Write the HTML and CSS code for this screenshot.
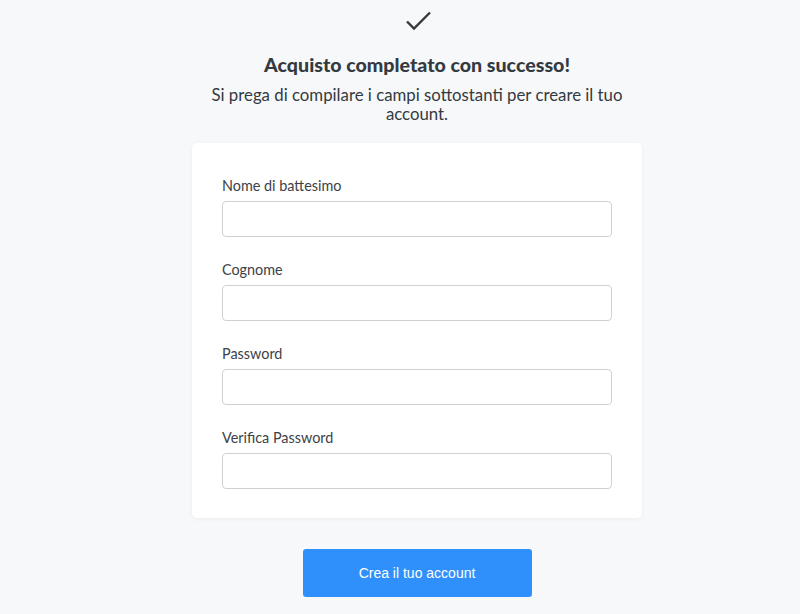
FILE: index.html
```html
<!DOCTYPE html>
<html lang="it">
<head>
<meta charset="utf-8">
<link rel="stylesheet" href="styles.css">
</head>
<body>
<main class="page">
  <svg class="check" width="30" height="24" viewBox="0 0 30 24"><path d="M3 11.5 L10 18.5 L26 2.5" fill="none" stroke="#343a40" stroke-width="2.4"/></svg>
  <h1 class="title">Acquisto completato con successo!</h1>
  <p class="subtitle">Si prega di compilare i campi sottostanti per creare il tuo account.</p>
  <form class="card">
    <div class="field"><label class="label">Nome di battesimo</label><input class="input" type="text"></div>
    <div class="field"><label class="label">Cognome</label><input class="input" type="text"></div>
    <div class="field"><label class="label">Password</label><input class="input" type="password"></div>
    <div class="field"><label class="label">Verifica Password</label><input class="input" type="password"></div>
  </form>
  <button class="btn" type="button">Crea il tuo account</button>
</main>
</body>
</html>
```
FILE: styles.css
```css
html, body { margin: 0; padding: 0; }
body {
  background: #f7f8fa;
  font-family: Lato, "Open Sans", sans-serif;
  color: #343a40;
  height: 614px;
  overflow: hidden;
}
.page {
  display: flex;
  flex-direction: column;
  align-items: center;
  padding-top: 10px;
  padding-left: 34px;
}
.check { display: block; margin-left: 3px; }
.title {
  margin: 18px 0 0;
  font-size: 19.6px;
  font-weight: 900;
  line-height: 25px;
}
.subtitle {
  margin: 8px 0 0;
  width: 450px;
  text-align: center;
  font-size: 16.8px;
  line-height: 19px;
}
.card {
  margin-top: 20px;
  width: 390px;
  padding: 33px 30px 29px;
  background: #fff;
  border-radius: 5px;
  box-shadow: 0 1px 4px rgba(0,0,0,0.05);
  display: flex;
  flex-direction: column;
  gap: 23px;
}
.field { display: flex; flex-direction: column; }
.label {
  font-size: 14.4px;
  line-height: 20px;
  color: #3d4248;
  margin-bottom: 5px;
}
.input {
  box-sizing: border-box;
  width: 100%;
  height: 36px;
  border: 1px solid #ced1d6;
  border-radius: 4px;
  background: #fff;
  margin: 0;
}
.btn {
  margin-top: 31px;
  width: 229px;
  height: 48px;
  border: none;
  border-radius: 3px;
  background: #3090fb;
  color: #fff;
  font-family: "Liberation Sans", Arial, sans-serif;
  font-size: 14px;
}
```
